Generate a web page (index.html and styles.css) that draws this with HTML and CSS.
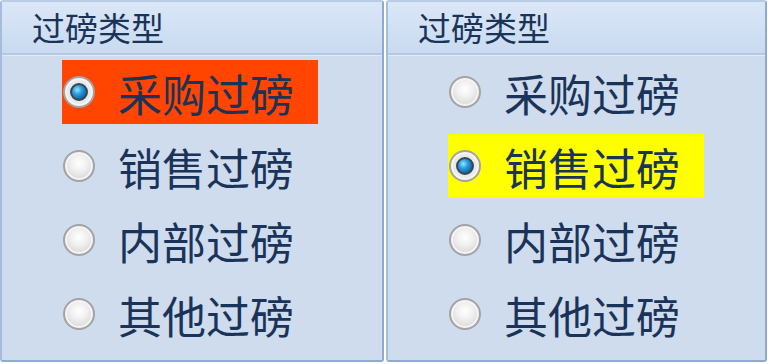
FILE: index.html
```html
<!DOCTYPE html>
<html lang="zh-CN">
<head>
<meta charset="utf-8">
<title>过磅类型</title>
<link rel="stylesheet" href="styles.css">
</head>
<body>
<div class="wrap">
  <section class="group group-left">
    <div class="group-head">过磅类型</div>
    <div class="group-body">
      <div class="row"><label class="opt opt-orange"><span class="radio checked"></span><span class="opt-text">采购过磅</span></label></div>
      <div class="row"><label class="opt"><span class="radio"></span><span class="opt-text">销售过磅</span></label></div>
      <div class="row"><label class="opt"><span class="radio"></span><span class="opt-text">内部过磅</span></label></div>
      <div class="row"><label class="opt"><span class="radio"></span><span class="opt-text">其他过磅</span></label></div>
    </div>
  </section>
  <section class="group group-right">
    <div class="group-head">过磅类型</div>
    <div class="group-body">
      <div class="row"><label class="opt"><span class="radio"></span><span class="opt-text">采购过磅</span></label></div>
      <div class="row"><label class="opt opt-yellow"><span class="radio checked"></span><span class="opt-text">销售过磅</span></label></div>
      <div class="row"><label class="opt"><span class="radio"></span><span class="opt-text">内部过磅</span></label></div>
      <div class="row"><label class="opt"><span class="radio"></span><span class="opt-text">其他过磅</span></label></div>
    </div>
  </section>
</div>
</body>
</html>
```
FILE: styles.css
```css
html, body {
  margin: 0;
  padding: 0;
  background: #ffffff;
}
body {
  width: 768px;
  height: 364px;
  overflow: hidden;
  font-family: "Noto Sans CJK SC", "Noto Sans", sans-serif;
  color: #1a3459;
}
.wrap {
  display: flex;
  gap: 2px;
  height: 362px;
}
.group {
  box-sizing: border-box;
  height: 362px;
  background: #cfdcee;
  border: 2px solid #8fa9cf;
  border-top-color: #b9cce6;
  border-left-color: #a6bcdc;
  border-radius: 3px;
  display: flex;
  flex-direction: column;
}
.group-left { width: 384px; }
.group-right { width: 381px; }
.group-head {
  box-sizing: border-box;
  height: 53px;
  padding-left: 30px;
  font-size: 33px;
  line-height: 50px;
  background: linear-gradient(#dae7f7, #c9daf0);
  border-bottom: 2px solid #b3c8e4;
  box-shadow: 0 1px 0 #e2ebf6;
}
.group-body {
  display: flex;
  flex-direction: column;
}
.row {
  height: 74px;
  display: flex;
  align-items: center;
  padding-left: 60px;
}
.opt {
  box-sizing: border-box;
  width: 256px;
  height: 64px;
  display: flex;
  align-items: center;
  gap: 23px;
  padding-left: 1px;
}
.opt-orange { background: #ff4500; }
.opt-yellow { background: #ffff00; }
.opt-text {
  font-size: 44px;
  line-height: 1;
  white-space: nowrap;
  position: relative;
  top: 1px;
}
.radio {
  box-sizing: border-box;
  width: 32px;
  height: 32px;
  flex: none;
  border-radius: 50%;
  border: 2px solid #a3a3a3;
  background: radial-gradient(circle at 50% 40%, #ffffff 0%, #f1f1f1 35%, #d9d9d9 75%, #c9c9c9 100%);
  box-shadow: inset 0 0 0 2px #f4f4f4;
  display: flex;
  align-items: center;
  justify-content: center;
}
.radio.checked {
  background: radial-gradient(circle, #e0e0e0 0%, #f2f2f2 100%);
}
.radio.checked::after {
  content: "";
  box-sizing: border-box;
  width: 18px;
  height: 18px;
  border-radius: 50%;
  border: 2px solid #3c4650;
  background: radial-gradient(circle at 38% 35%, #9be3ff 0%, #2a9fe0 35%, #0c5c9e 80%, #07406f 100%);
}
```
